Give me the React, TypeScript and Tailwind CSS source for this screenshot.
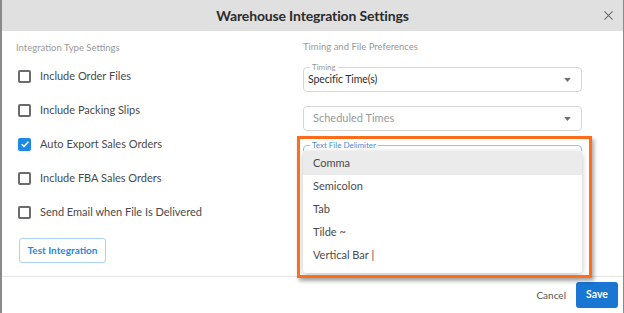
import React from "react";

const font = { fontFamily: "Lato, 'Noto Sans', sans-serif" };

function Checkbox({ checked }: { checked?: boolean }) {
  if (checked) {
    return (
      <span className="flex h-[13px] w-[13px] items-center justify-center rounded-[2px] bg-[#1e88e5]">
        <svg viewBox="0 0 12 12" className="h-[10px] w-[10px]">
          <path d="M2 6.2 L4.8 9 L10 3.2" fill="none" stroke="white" strokeWidth="1.8" />
        </svg>
      </span>
    );
  }
  return <span className="block h-[13px] w-[13px] rounded-[2px] border-2 border-[#6b6b6b]" />;
}

function Caret() {
  return (
    <svg viewBox="0 0 10 6" className="h-[4px] w-[7px]">
      <path d="M0 0 L10 0 L5 6 Z" fill="#6f6f6f" />
    </svg>
  );
}

const options = [
  { label: "Include Order Files" },
  { label: "Include Packing Slips" },
  { label: "Auto Export Sales Orders", checked: true },
  { label: "Include FBA Sales Orders" },
  { label: "Send Email when File Is Delivered" },
];

const delimiters = ["Comma", "Semicolon", "Tab", "Tilde ~", "Vertical Bar |"];

export default function App() {
  return (
    <div
      className="flex h-[313px] w-[624px] flex-col overflow-hidden border-l-2 border-r border-[#8a8a8a] bg-white"
      style={font}
    >
      <div className="relative flex h-[31px] shrink-0 items-center justify-center bg-[#e0e0e0]">
        <span className="text-[14px] font-bold tracking-[-0.15px] text-[#2b2b2b]">Warehouse Integration Settings</span>
        <svg viewBox="0 0 10 10" className="absolute right-[10px] top-[11px] h-[9px] w-[9px]">
          <path d="M0.5 0.5 L9.5 9.5 M9.5 0.5 L0.5 9.5" stroke="#6f6f6f" strokeWidth="1.2" />
        </svg>
      </div>

      <div className="relative flex h-[246px] shrink-0 border-b border-[#e4e4e4]">
        <div className="flex w-[301px] flex-col pl-[14px] pt-[9px]">
          <div className="h-[15px] text-[9.5px] leading-[15px] text-[#9a9a9a]">Integration Type Settings</div>
          <div className="mt-[4px] flex flex-col">
            {options.map((o) => (
              <div key={o.label} className="flex h-[34px] items-center pl-[2px]">
                <Checkbox checked={o.checked} />
                <span className="ml-[9px] text-[11px] text-[#4a4a4a]">{o.label}</span>
              </div>
            ))}
          </div>
          <button className="ml-[3px] mt-[9px] flex h-[25px] w-[87px] items-center justify-center rounded-[3px] border border-[#a9d1f5] text-[10px] font-bold text-[#1e88e5]">
            Test Integration
          </button>
        </div>

        <div className="relative flex w-[279px] flex-col pt-[8px]">
          <div className="h-[15px] text-[9.5px] leading-[15px] text-[#9a9a9a]">Timing and File Preferences</div>

          <div className="relative mt-[13px] flex h-[25px] items-center justify-between rounded-[4px] border border-[#d6d6d6] pl-[4px] pr-[10px]">
            <span className="absolute left-[6px] top-[-6px] bg-white px-[2px] text-[8px] leading-[10px] text-[#9a9a9a]">Timing</span>
            <span className="text-[10.5px] tracking-[-0.1px] text-[#2f2f2f]">Specific Time(s)</span>
            <Caret />
          </div>

          <div className="mt-[14px] flex h-[25px] items-center justify-between rounded-[4px] border border-[#d6d6d6] pl-[9px] pr-[10px]">
            <span className="text-[11px] text-[#9a9a9a]">Scheduled Times</span>
            <Caret />
          </div>

          <div className="relative mt-[14px] h-[25px] rounded-[4px] border border-[#90c4ee]">
            <span className="absolute left-[6px] top-[-6px] bg-white px-[2px] text-[8px] leading-[10px] text-[#4a90d9]">Text File Delimiter</span>
          </div>

          <div className="absolute left-0 top-[120px] w-[279px] rounded-[3px] bg-white shadow-[0_2px_6px_rgba(0,0,0,0.25)]">
            {delimiters.map((d, i) => (
              <div
                key={d}
                className={`flex h-[23px] items-center pl-[10px] text-[11px] text-[#4a4a4a] ${i === 0 ? "h-[24px] bg-[#ebebeb]" : ""}`}
              >
                {d}
              </div>
            ))}
            <div className="h-[6px]" />
          </div>

          <div className="pointer-events-none absolute left-[-6px] top-[105px] h-[142px] w-[295px] border-[3px] border-[#ff6c1a] shadow-[2px_3px_4px_rgba(0,0,0,0.35)]" />
        </div>
      </div>

      <div className="flex flex-1 items-center justify-end pr-[5px]">
        <span className="mr-[10px] text-[10px] text-[#555555]">Cancel</span>
        <button className="flex h-[26px] w-[42px] items-center justify-center rounded-[3px] bg-[#1976d2] text-[10.5px] font-bold text-white">
          Save
        </button>
      </div>
    </div>
  );
}
